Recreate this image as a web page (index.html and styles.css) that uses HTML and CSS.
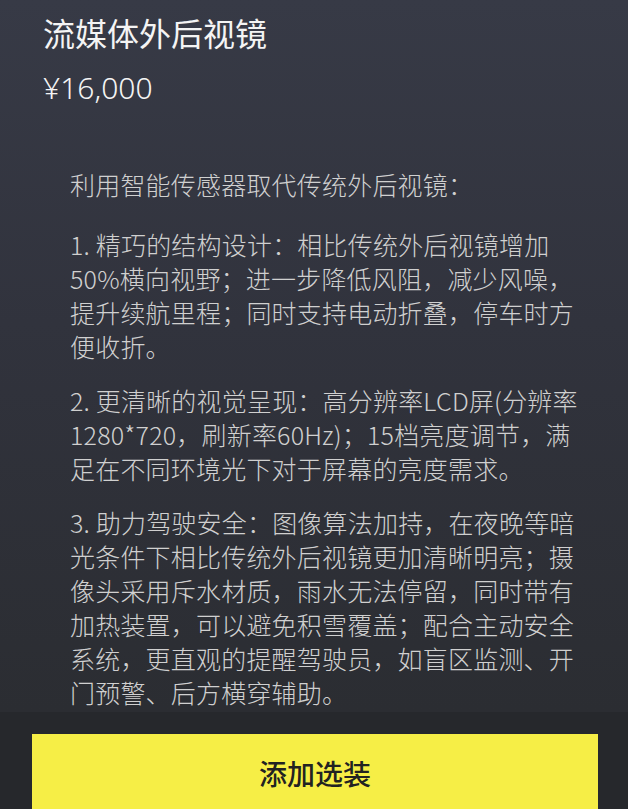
FILE: index.html
```html
<!DOCTYPE html>
<html lang="zh-CN">

<head>
    <meta charset="UTF-8">
    <meta name="viewport" content="width=device-width, initial-scale=1.0">
    <title>流媒体外后视镜</title>
    <link rel="stylesheet" href="styles.css">
</head>

<body>
    <!-- Option Header -->
    <div class="option-head">
        <h1 class="option-title">流媒体外后视镜</h1>
        <div class="option-price">¥16,000</div>
    </div>

    <!-- Description -->
    <div class="option-desc">
        <p>利用智能传感器取代传统外后视镜：</p>
        <p>1. 精巧的结构设计：相比传统外后视镜增加<br>50%横向视野；进一步降低风阻，减少风噪，<br>提升续航里程；同时支持电动折叠，停车时方<br>便收折。</p>
        <p>2. 更清晰的视觉呈现：高分辨率LCD屏(分辨率<br>1280*720，刷新率60Hz)；15档亮度调节，满<br>足在不同环境光下对于屏幕的亮度需求。</p>
        <p>3. 助力驾驶安全：图像算法加持，在夜晚等暗<br>光条件下相比传统外后视镜更加清晰明亮；摄<br>像头采用斥水材质，雨水无法停留，同时带有<br>加热装置，可以避免积雪覆盖；配合主动安全<br>系统，更直观的提醒驾驶员，如盲区监测、开<br>门预警、后方横穿辅助。</p>
    </div>

    <!-- Bottom Action -->
    <div class="option-footer">
        <button class="add-btn">添加选装</button>
    </div>
</body>

</html>
```

FILE: styles.css
```css
/* Basic Reset & Variables */
* {
    margin: 0;
    padding: 0;
    box-sizing: border-box;
}

:root {
    --bg-top: #373a46;
    --bg-bottom: #2b2d32;
    --footer: #26282c;
    --title: #f4f4f4;
    --text: #d0d0d0;
    --accent: #f6ee46;
}

html,
body {
    height: 100%;
    overflow: hidden;
}

body {
    display: flex;
    flex-direction: column;
    font-family: 'Noto Sans CJK SC', 'Noto Sans', sans-serif;
    background: linear-gradient(180deg, var(--bg-top) 0%, #31333d 40%, var(--bg-bottom) 88%);
    color: var(--text);
}

/* Header */
.option-head {
    padding: 12px 43px 0;
}

.option-title {
    font-size: 32px;
    line-height: 40px;
    font-weight: 400;
    color: var(--title);
}

.option-price {
    margin-top: 16px;
    font-family: 'Noto Sans', 'Noto Sans CJK SC', sans-serif;
    font-size: 30px;
    line-height: 40px;
    font-weight: 300;
    color: var(--title);
}

/* Description */
.option-desc {
    padding: 59px 20px 0 70px;
    font-size: 25px;
    line-height: 34px;
    letter-spacing: 0.2px;
    font-weight: 300;
}

.option-desc p {
    margin-bottom: 20px;
    white-space: nowrap;
}

.option-desc p:first-child {
    margin-bottom: 26px;
}

.option-desc p:last-child {
    margin-bottom: 0;
}

/* Footer */
.option-footer {
    flex: 1;
    margin-top: 3px;
    background: var(--footer);
    padding: 22px 30px 0 32px;
}

.add-btn {
    display: block;
    width: 566px;
    height: 78px;
    border: none;
    background: var(--accent);
    font-family: inherit;
    font-size: 28px;
    font-weight: 500;
    color: #222;
}
```
